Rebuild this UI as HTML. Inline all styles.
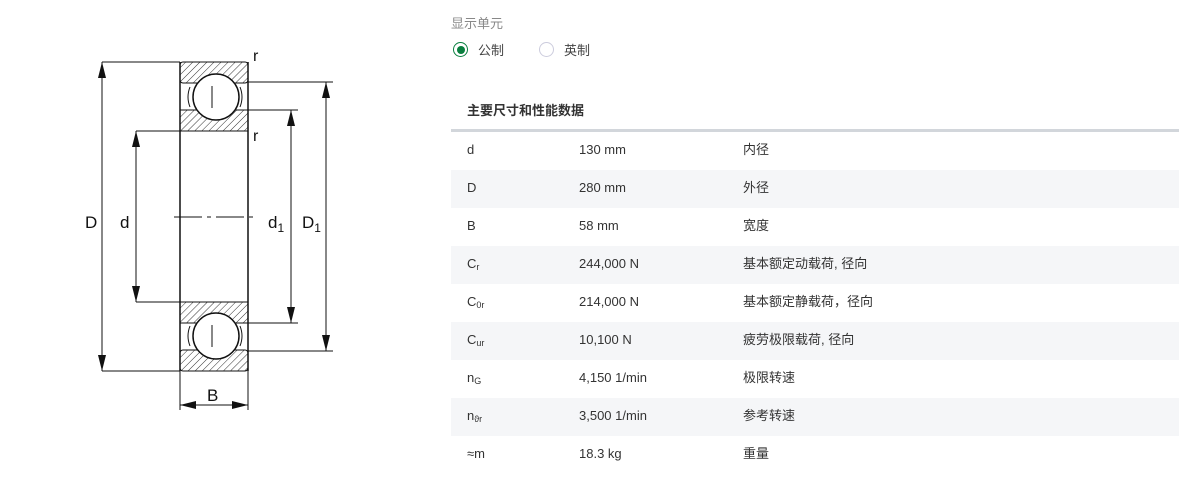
<!DOCTYPE html>
<html><head><meta charset="utf-8"><style>
body{margin:0;width:1198px;height:501px;background:#fff;font-family:"Liberation Sans","Noto Sans CJK SC",sans-serif;position:relative;overflow:hidden}
.a{position:absolute}
.t{position:absolute;left:451px;top:129px;width:728px;border-top:3px solid #d2d6db}
.r{height:38px;position:relative;font-size:13px;color:#333}
.r:nth-child(even){background:#f5f6f8}
.r span{position:absolute;top:-1px;line-height:38px;height:38px}
.c1{left:16px}.c2{left:128px}.c3{left:292px}
sub{font-size:9px;vertical-align:-2px;line-height:0}
</style></head><body>
<svg class="a" style="left:0;top:0" width="440" height="501" viewBox="0 0 440 501">
<defs><pattern id="h" width="5" height="5" patternUnits="userSpaceOnUse" patternTransform="rotate(45)"><line x1="0" y1="0" x2="0" y2="5" stroke="#333" stroke-width="1"/></pattern></defs>
<g stroke="#111" fill="none" stroke-width="1">
<rect x="180" y="62" width="68" height="21" fill="url(#h)" rx="3"/>
<rect x="180" y="110" width="68" height="21" fill="url(#h)"/>
<rect x="180" y="302" width="68" height="21" fill="url(#h)"/>
<rect x="180" y="350" width="68" height="21" fill="url(#h)" rx="3"/>
<line x1="180" y1="62" x2="180" y2="371" stroke-width="1.5"/>
<line x1="248" y1="62" x2="248" y2="371" stroke-width="1.5"/>
<circle cx="216" cy="97" r="23" fill="#fff" stroke-width="1.5"/>
<circle cx="216" cy="336" r="23" fill="#fff" stroke-width="1.5"/>
<path d="M190 87 Q186 97 190 107 M240 87 Q244 97 240 107 M190 326 Q186 336 190 346 M240 326 Q244 336 240 346"/>
<path d="M212 86 V108 M212 325 V347"/>
<line x1="174" y1="217" x2="255" y2="217" stroke-dasharray="28,5,4,5"/>
<path d="M102 62H180 M136 131H180 M136 302H180 M248 110H298 M248 323H298 M248 82H333 M248 351H333 M102 371H180 M180 371V410 M248 371V410"/>
<path d="M102 62V371 M136 131V302 M291 110V323 M326 82V351 M180 405H248"/>
</g>
<g fill="#111">
<path d="M102 62l-4 16h8z M102 371l-4-16h8z M136 131l-4 16h8z M136 302l-4-16h8z M291 110l-4 16h8z M291 323l-4-16h8z M326 82l-4 16h8z M326 351l-4-16h8z M180 405l16-4v8z M248 405l-16-4v8z"/>
</g>
<g font-family="Liberation Sans,sans-serif" font-size="17" fill="#111">
<text x="85" y="228">D</text><text x="120" y="228">d</text>
<text x="268" y="228">d<tspan font-size="12" dy="4">1</tspan></text>
<text x="302" y="228">D<tspan font-size="12" dy="4">1</tspan></text>
<text x="207" y="401">B</text>
<text x="253" y="61" font-size="16">r</text><text x="253" y="141" font-size="16">r</text>
</g>
</svg>
<div class="a" style="left:451px;top:13px;font-size:13px;color:#888">显示单元</div>
<div class="a" style="left:453px;top:42px;width:13px;height:13px;border:1.5px solid #0a7f3f;border-radius:50%"></div>
<div class="a" style="left:457px;top:46px;width:8px;height:8px;background:#0a7f3f;border-radius:50%"></div>
<div class="a" style="left:478px;top:40px;font-size:13px;color:#444">公制</div>
<div class="a" style="left:539px;top:42px;width:13px;height:13px;border:1.5px solid #ccd;border-radius:50%"></div>
<div class="a" style="left:564px;top:40px;font-size:13px;color:#444">英制</div>
<div class="a" style="left:467px;top:100px;font-size:13px;font-weight:bold;color:#333">主要尺寸和性能数据</div>
<div class="t">
<div class="r"><span class="c1">d</span><span class="c2">130 mm</span><span class="c3">内径</span></div>
<div class="r"><span class="c1">D</span><span class="c2">280 mm</span><span class="c3">外径</span></div>
<div class="r"><span class="c1">B</span><span class="c2">58 mm</span><span class="c3">宽度</span></div>
<div class="r"><span class="c1">C<sub>r</sub></span><span class="c2">244,000 N</span><span class="c3">基本额定动载荷, 径向</span></div>
<div class="r"><span class="c1">C<sub>0r</sub></span><span class="c2">214,000 N</span><span class="c3">基本额定静载荷，径向</span></div>
<div class="r"><span class="c1">C<sub>ur</sub></span><span class="c2">10,100 N</span><span class="c3">疲劳极限载荷, 径向</span></div>
<div class="r"><span class="c1">n<sub>G</sub></span><span class="c2">4,150 1/min</span><span class="c3">极限转速</span></div>
<div class="r"><span class="c1">n<sub>ϑr</sub></span><span class="c2">3,500 1/min</span><span class="c3">参考转速</span></div>
<div class="r"><span class="c1">≈m</span><span class="c2">18.3 kg</span><span class="c3">重量</span></div>
</div>
</body></html>
